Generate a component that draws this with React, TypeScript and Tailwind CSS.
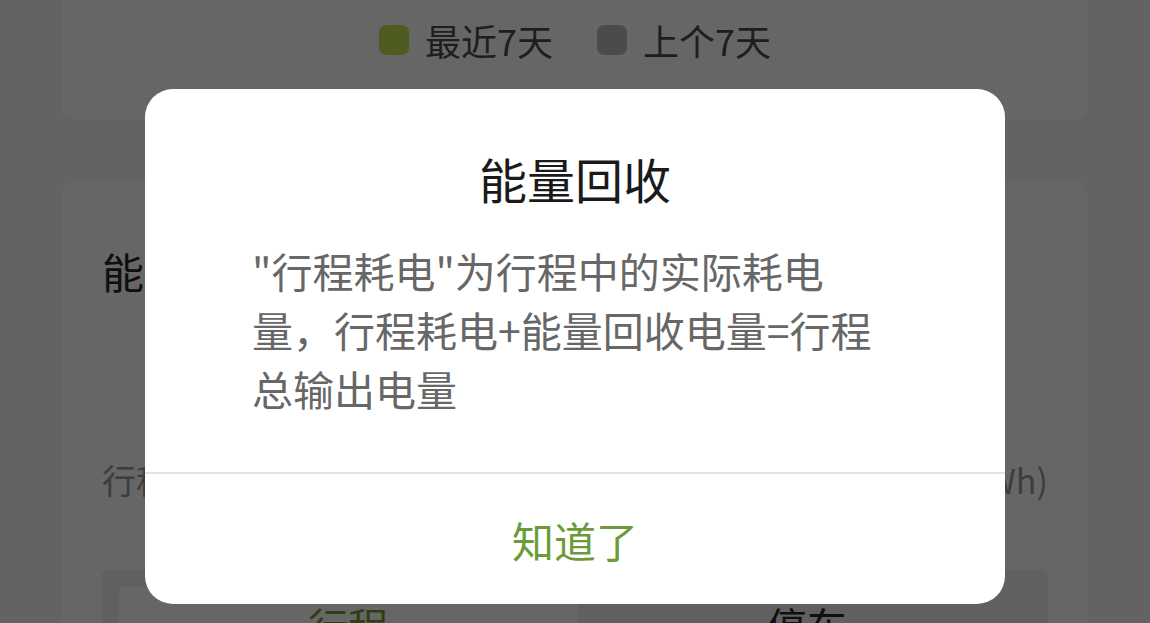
import React from "react";

const font = "font-['Noto_Sans_CJK_SC',_'Noto_Sans',_sans-serif]";

const Legend = ({ color, label }: { color: string; label: string }) => {
   return (
      <div className="flex items-center gap-[16px] h-[38px]">
         <span className={`w-[30px] h-[30px] rounded-[7px] ${color}`} />
         <span className="text-[36px] leading-none text-[#4d4d4d]">{label}</span>
      </div>
   );
};

const EnergyDialog = () => {
   return (
      <div className="w-[860px] h-[515px] bg-white rounded-[28px] flex flex-col overflow-hidden">
         <div className="flex-1 flex flex-col px-[107px] pt-[53px]">
            <div className="text-center text-[48px] leading-[72px] text-[#1a1a1a]">
               能量回收
            </div>
            <p className="mt-[27px] text-[41px] leading-[59px] text-[#676767]">
               "行程耗电"为行程中的实际耗电量，行程耗电+能量回收电量=行程总输出电量
            </p>
         </div>
         <div className="h-[2px] bg-[#e3e3e3]" />
         <button className="h-[130px] flex items-center justify-center text-[42px] text-[#6b9b37]">
            知道了
         </button>
      </div>
   );
};

export default function App() {
   return (
      <div className={`relative w-[1150px] h-[623px] overflow-hidden bg-[#f7f7f7] ${font}`}>
         <div className="flex flex-col px-[62px]">
            {/* chart legend card */}
            <div className="h-[120px] bg-white rounded-b-[14px] flex items-start justify-center gap-[44px] pt-[21px]">
               <Legend color="bg-[#c4e656]" label="最近7天" />
               <Legend color="bg-[#bcbcbc]" label="上个7天" />
            </div>

            {/* energy card */}
            <div className="mt-[62px] h-[500px] bg-white rounded-[14px] px-[40px] pt-[62px]">
               <div className="text-[42px] leading-[54px] text-[#262626]">
                  能量回收
               </div>
               <div className="mt-[162px] flex justify-between text-[34px] leading-[40px] text-[#999]">
                  <span>行程耗电(kWh)</span>
                  <span>能量回收(kWh)</span>
               </div>
               <div className="mt-[70px] bg-[#efefef] rounded-[6px] p-[17px] pr-[12px] flex">
                  <div className="flex-1 bg-white rounded-[4px] flex justify-center pt-[8px] text-[40px] text-[#6b9b37]">
                     行程
                  </div>
                  <div className="flex-1 flex justify-center pt-[8px] text-[40px] text-[#262626]">
                     停车
                  </div>
               </div>
            </div>
         </div>

         {/* dim overlay + dialog */}
         <div className="absolute inset-0 bg-black/60 flex justify-center pt-[89px]">
            <EnergyDialog />
         </div>
      </div>
   );
}
